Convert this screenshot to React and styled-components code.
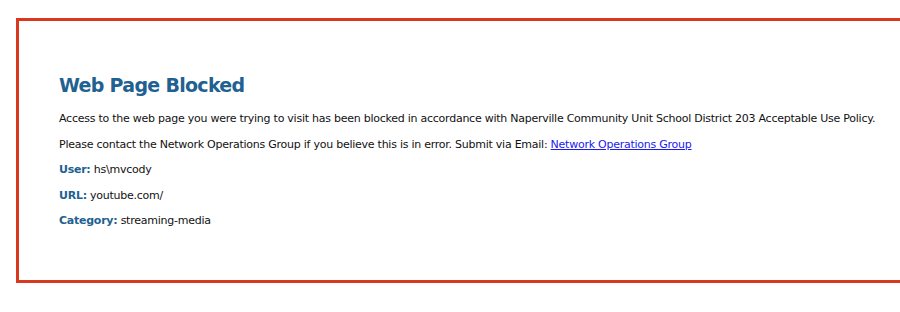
import React from 'react';
import styled, { createGlobalStyle } from 'styled-components';

const Global = createGlobalStyle`
  html, body {
    margin: 0;
    padding: 0;
    background: #ffffff;
    overflow: hidden;
  }
`

const Page = styled.div`
  padding: 18px 0 0 16px;
  width: 900px;
  height: 312px;
  box-sizing: border-box;
`

const Frame = styled.div`
  width: 900px;
  height: 265px;
  box-sizing: border-box;
  border: 3px solid #d9381e;
  border-right: none;
  padding: 53px 0 0 40px;
  font-family: "DejaVu Sans", Verdana, sans-serif;
`

const Title = styled.h1`
  margin: 0 0 10px 0;
  font-size: 19px;
  font-weight: bold;
  color: #1f6191;
  letter-spacing: -0.7px;
`

const Line = styled.p`
  margin: 0;
  font-size: 11px;
  line-height: 25.5px;
  color: #111;
  letter-spacing: -0.25px;
  white-space: nowrap;
`

const Label = styled.b`
  color: #1f6191;
`

const MailLink = styled.a`
  color: #1a1aee;
  text-decoration: underline;
`

export default function App() {
  return (
    <Page>
      <Global />
      <Frame>
        <Title>Web Page Blocked</Title>
        <Line>Access to the web page you were trying to visit has been blocked in accordance with Naperville Community Unit School District 203 Acceptable Use Policy.</Line>
        <Line>Please contact the Network Operations Group if you believe this is in error. Submit via Email: <MailLink href="#">Network Operations Group</MailLink></Line>
        <Line><Label>User:</Label> hs\mvcody</Line>
        <Line><Label>URL:</Label> youtube.com/</Line>
        <Line><Label>Category:</Label> streaming-media</Line>
      </Frame>
    </Page>
  );
}
